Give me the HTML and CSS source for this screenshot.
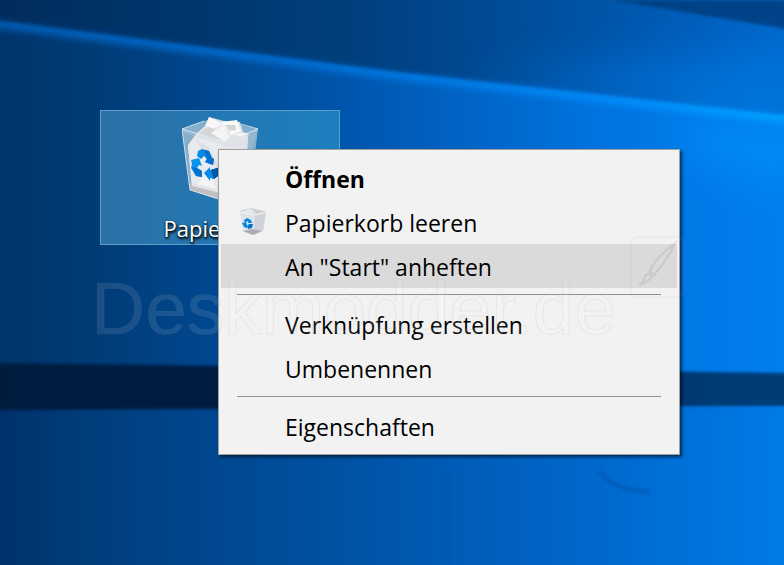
FILE: index.html
```html
<!DOCTYPE html>
<html lang="de">
<head>
<meta charset="utf-8">
<meta name="viewport" content="width=device-width, initial-scale=1">
<title>Desktop</title>
<link rel="stylesheet" href="styles.css">
</head>
<body>
<main class="desktop">
  <svg class="wallpaper" viewBox="0 0 784 565" preserveAspectRatio="none" aria-hidden="true">
    <defs>
      <linearGradient id="base" x1="0" y1="0" x2="1" y2="0">
        <stop offset="0" stop-color="#003069"/>
        <stop offset=".12" stop-color="#003d7b"/>
        <stop offset=".4" stop-color="#004f9f"/>
        <stop offset=".7" stop-color="#0064c6"/>
        <stop offset="1" stop-color="#007be9"/>
      </linearGradient>
      <linearGradient id="sky" x1="0" y1="0" x2="1" y2="0">
        <stop offset="0" stop-color="#002c5c"/>
        <stop offset=".45" stop-color="#003f7d"/>
        <stop offset=".75" stop-color="#0053a6"/>
        <stop offset="1" stop-color="#0068cc"/>
      </linearGradient>
      <linearGradient id="pane" x1="0" y1="0" x2="1" y2="0">
        <stop offset="0" stop-color="#003469"/>
        <stop offset=".15" stop-color="#003d79"/>
        <stop offset=".45" stop-color="#0056ae"/>
        <stop offset=".75" stop-color="#0073df"/>
        <stop offset="1" stop-color="#007fef"/>
      </linearGradient>
      <linearGradient id="beam" x1="0" y1="0" x2="1" y2="0">
        <stop offset="0" stop-color="#0058ad"/>
        <stop offset=".4" stop-color="#006dd2"/>
        <stop offset=".75" stop-color="#008af9"/>
        <stop offset="1" stop-color="#00a0ff"/>
      </linearGradient>
      <linearGradient id="bar" x1="0" y1="0" x2="1" y2="0">
        <stop offset="0" stop-color="#001b3e"/>
        <stop offset=".3" stop-color="#001c40"/>
        <stop offset=".85" stop-color="#003870"/>
        <stop offset="1" stop-color="#003d78"/>
      </linearGradient>
      <filter id="soft1" x="-10%" y="-30%" width="120%" height="160%"><feGaussianBlur stdDeviation="1.5"/></filter>
      <filter id="soft2" x="-10%" y="-30%" width="120%" height="160%"><feGaussianBlur stdDeviation="3"/></filter>
      <filter id="soft3" x="-50%" y="-50%" width="200%" height="200%"><feGaussianBlur stdDeviation="22"/></filter>
    </defs>
    <rect width="784" height="565" fill="url(#base)"/>
    <path d="M0 0H784V122L0 26Z" fill="url(#sky)"/>
    <path d="M480 80L800 50V125Z" fill="#007be8" opacity=".6" filter="url(#soft3)"/>
    <path d="M610 0H800V31Z" fill="#003e7e" opacity=".85" filter="url(#soft1)"/>
    <path d="M-10 22L400 76L794 121V420H-10Z" fill="url(#pane)"/>
    <path d="M660 120L800 125V190L700 160Z" fill="#0097ff" opacity=".55" filter="url(#soft3)"/>
    <path d="M-10 24L400 77L794 121" fill="none" stroke="url(#beam)" stroke-width="7" filter="url(#soft2)"/>
    <path d="M-10 22L400 75L794 119" fill="none" stroke="url(#beam)" stroke-width="4" opacity=".9" filter="url(#soft1)"/>
    <path d="M-10 408H794V575H-10Z" fill="url(#base)"/>
    <path d="M-10 363L794 373V406L-10 410Z" fill="url(#bar)" filter="url(#soft1)"/>
    <path d="M598 471C608 482 622 492 650 491" fill="none" stroke="#0055ac" stroke-width="4" opacity=".65" filter="url(#soft1)"/>
    <path d="M446 470H452V565H446Z" fill="#004387" opacity=".1" filter="url(#soft1)"/>
  </svg>

  <a class="shortcut" href="#papierkorb">
    <svg class="shortcut-icon" viewBox="0 0 76 84" aria-hidden="true">
      <path d="M0 12L31 1L76 12L68 77L43 84L8 73Z" fill="#b9ccda" opacity=".65"/>
      <path d="M6 28L14 17L66 19L64 73L42 80L10 71Z" fill="#e7e9ed"/>
      <path d="M6 28L20 22L43 26L42 80L10 69Z" fill="#e9eaee"/>
      <path d="M13 22L27 31L40 54L24 41Z" fill="#dcdfe5"/>
      <path d="M13 70L25 55L36 74Z" fill="#f4f4f7"/>
      <path d="M8 66L42 75V84L8 73Z" fill="#c1bfc2"/>
      <path d="M10 66L42 74V77L10 69Z" fill="#e5e3e5"/>
      <path d="M14 17L25 7L27 0L40 4L58 5L61 15L68 18L43 26Z" fill="#e2e3e5"/>
      <path d="M23 9L27 0L41 7L31 12Z" fill="#f8f8f9"/>
      <path d="M17 16L26 10L36 13L42 24L31 22Z" fill="#d3d6d9"/>
      <path d="M29 16L41 8L48 20L43 25Z" fill="#f4f4f5"/>
      <path d="M39 5L55 3L59 14L49 18Z" fill="#f8f8f8"/>
      <path d="M43 8L53 8L54 13L47 14Z" fill="#d2d7d6"/>
      <path d="M51 17L67 16L61 20Z" fill="#f8f9fa"/>
      <path d="M0 12L43 25L76 12L70 32L43 29L2 16Z" fill="#c8d2dc" opacity=".25"/>
      <path d="M0 12L22 4M59 7L76 12L43 25L0 12L8 73L43 84" fill="none" stroke="#e2edf4" opacity=".85"/>
      <path d="M15 39L16 34L20 32L27 34L30 41L32 42L31 48L23 45L25 42L22 39L19 42Z" fill="#078be4"/>
      <path d="M22 33L27 34L30 41L32 42L31 48L23 45L25 42Z" fill="#056fd0"/>
      <path d="M9 43L17 41L20 49L17 48L15 51L20 54V60L14 59L9 51L10 47Z" fill="#0793e9"/>
      <path d="M10 50L15 51L20 54V60L14 59Z" fill="#0571ce"/>
      <path d="M22 56L28 50V53L38 50L36 59L32 62L28 61V64Z" fill="#078be4"/>
      <path d="M29 53L38 50L36 59L32 62Z" fill="#0454ac"/>
    </svg>
    <span class="shortcut-label">Papierkorb</span>
  </a>

  <div class="context-menu" role="menu" aria-label="Papierkorb">
    <button class="item default" type="button" role="menuitem">Öffnen</button>
    <button class="item" type="button" role="menuitem">
      <svg class="item-icon" viewBox="0 0 28 30" aria-hidden="true">
        <path d="M1 4L11 1L27 4L24 24L14 28L4 25Z" fill="#e0e3e7"/>
        <path d="M1 4L11 1L27 5L16 8Z" fill="#c9cbcd"/>
        <path d="M11 1L18 7L3 5Z" fill="#e9eaeb"/>
        <path d="M16 8L27 5L24 24L15 28Z" fill="#cfd2d8"/>
        <path d="M4 24L13 22L23 24L14 28Z" fill="#a9adb5"/>
        <path d="M2 5L16 8L27 5" fill="none" stroke="#f7f8f9"/>
        <path d="M5 13L8 11L12 13L13 16L9 16V14L6 16Z" fill="#078ce5"/>
        <path d="M3 16L7 15L8 18L8 21L5 20Z" fill="#0789e0"/>
        <path d="M8 19L10 17L14 17L13 21L9 22Z" fill="#0376cf"/>
      </svg>
      Papierkorb leeren
    </button>
    <button class="item active" type="button" role="menuitem">An "Start" anheften</button>
    <hr class="divider">
    <button class="item" type="button" role="menuitem">Verknüpfung erstellen</button>
    <button class="item" type="button" role="menuitem">Umbenennen</button>
    <hr class="divider">
    <button class="item" type="button" role="menuitem">Eigenschaften</button>
  </div>

  <div class="watermark">
    <span>Deskmodder.de</span>
    <svg class="brush" viewBox="0 0 56 66" aria-hidden="true">
      <rect class="brush-frame" x="1" y="1" width="53" height="60" rx="6"/>
      <path d="M9 49Q14 46 15 40L19 37L22 41L19 44Q16 46 9 49ZM20 35Q25 22 45 7Q40 20 24 39Z"/>
    </svg>
  </div>
</main>
</body>
</html>
```

FILE: styles.css
```css
* {
  box-sizing: border-box;
}

body {
  margin: 0;
  font-family: "Open Sans", "Noto Sans", sans-serif;
  font-size: 23px;
}

.desktop {
  position: relative;
  min-height: 100vh;
  overflow: hidden;
  background: #004b98;
}

.wallpaper {
  position: absolute;
  inset: 0;
  width: 100%;
  height: 100%;
}

/* Desktop objects sit at free positions on the canvas. */
.shortcut {
  position: absolute;
  left: 100px;
  top: 110px;
  width: 240px;
  display: flex;
  flex-direction: column;
  align-items: center;
  gap: 14px;
  padding: 6px 0 3px;
  border: 1px solid #5ba0cc;
  background: linear-gradient(90deg, #2b70a6, #1d7ebf);
  color: #fff;
  text-decoration: none;
}

.shortcut-icon {
  width: 76px;
  height: 84px;
}

.shortcut-label {
  font-size: 22px;
  line-height: 26px;
  text-shadow: 1px 2px 3px #000, 0 1px 2px #000;
}

.context-menu {
  position: absolute;
  left: 218px;
  top: 149px;
  width: 462px;
  padding: 6px 2px;
  border: 1px solid #a0a0a0;
  background: #f2f2f2;
  box-shadow: 2px 2px 3px rgba(0, 0, 0, .6);
}

.item {
  position: relative;
  display: block;
  width: 100%;
  height: 44px;
  padding: 2px 0 0 64px;
  border: 0;
  background: none;
  color: #000;
  font: inherit;
  line-height: 42px;
  text-align: left;
  white-space: nowrap;
}

.default {
  font-weight: 700;
}

.active {
  background: #dadada;
}

.item-icon {
  position: absolute;
  left: 18px;
  top: 7px;
  width: 28px;
  height: 30px;
}

.divider {
  height: 1px;
  margin: 6px 16px 7px;
  border: 0;
  background: #919191;
}

.watermark {
  position: absolute;
  left: 91px;
  top: 236px;
  display: flex;
  gap: 14px;
  color: rgba(255, 255, 255, .1);
  font-family: "Liberation Sans", sans-serif;
  font-size: 75px;
  line-height: 144px;
  -webkit-text-stroke: 1px rgba(128, 128, 128, .1);
  pointer-events: none;
}

.brush {
  width: 56px;
  height: 66px;
  fill: none;
  stroke: rgba(128, 128, 128, .18);
  stroke-width: 2;
}

.brush-frame {
  stroke: rgba(160, 160, 160, .08);
}
```
